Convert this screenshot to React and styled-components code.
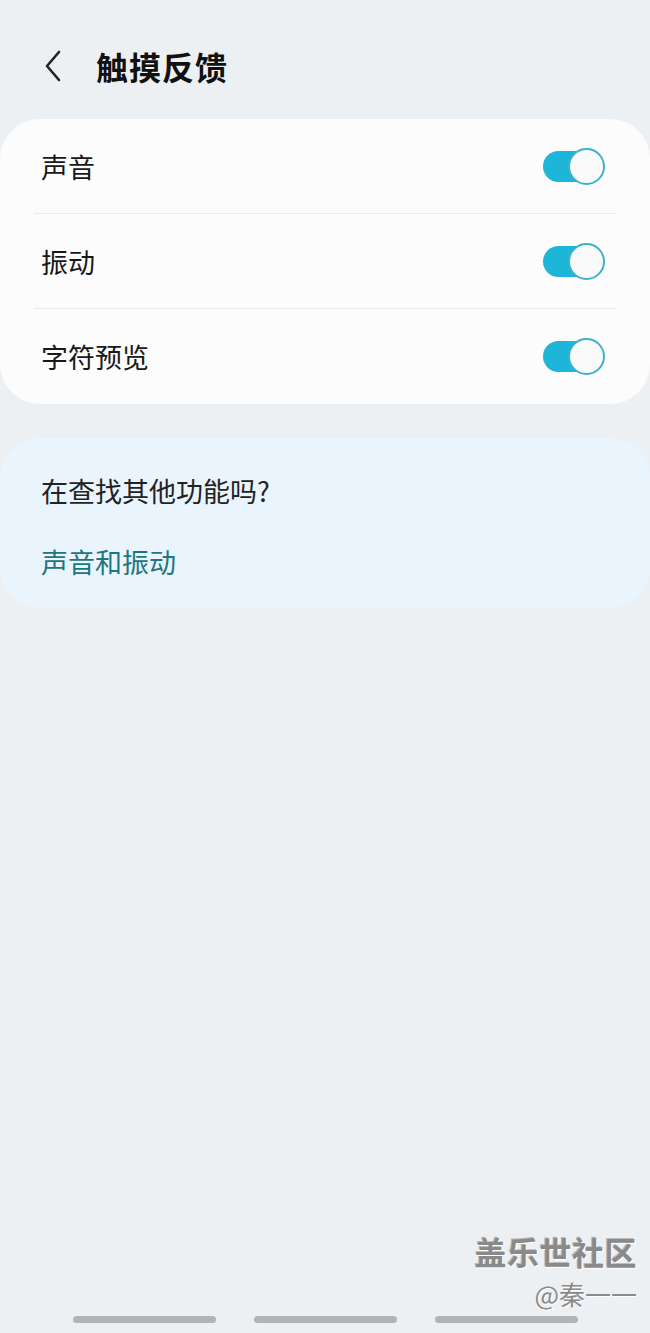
import React from 'react'
import styled, { createGlobalStyle } from 'styled-components'

const GlobalStyle = createGlobalStyle`
  html, body {
    margin: 0;
    padding: 0;
    background: #edf0f2;
  }
  body {
    font-family: "Noto Sans CJK SC", "Noto Sans", sans-serif;
  }
`

const Page = styled.div`
  width: 650px;
  height: 1333px;
  display: flex;
  flex-direction: column;
  background: #edf0f2;
  overflow: hidden;
`

const Header = styled.div`
  height: 119px;
  display: flex;
  align-items: center;
  padding: 12px 0 0 38px;
  box-sizing: border-box;
  gap: 28px;
`

const BackButton = styled.div`
  width: 30px;
  height: 36px;
  display: flex;
  align-items: center;
  justify-content: center;
`

const Title = styled.h1`
  margin: 0;
  font-size: 32px;
  font-weight: 700;
  color: #111;
  letter-spacing: 1px;
`

const Card = styled.div`
  background: ${({ tint }) => (tint ? '#eaf4fc' : '#fcfcfc')};
  border-radius: 40px;
  display: flex;
  flex-direction: column;
  padding: ${({ pad }) => pad || '0'};
`

const Row = styled.div`
  height: 95px;
  margin: 0 34px;
  display: flex;
  align-items: center;
  justify-content: space-between;
  border-bottom: ${({ last }) => (last ? 'none' : '1.5px solid #e8eaeb')};
  box-sizing: border-box;
`

const Label = styled.span`
  font-size: 27px;
  color: #181818;
  padding-left: 7px;
`

const Toggle = styled.div`
  position: relative;
  width: 62px;
  height: 37px;
  margin-right: 11px;
  display: flex;
  align-items: center;
`

const Track = styled.div`
  width: 58px;
  height: 31px;
  border-radius: 16px;
  background: #1db5d8;
`

const Thumb = styled.div`
  position: absolute;
  right: 0;
  top: 0;
  width: 33px;
  height: 33px;
  border-radius: 50%;
  background: #fafafa;
  border: 2px solid #3db2c9;
`

const Spacer = styled.div`
  height: 34px;
`

const Question = styled.div`
  font-size: 27px;
  color: #222;
  padding-left: 41px;
  height: 36px;
  line-height: 36px;
`

const Link = styled.div`
  font-size: 27px;
  color: #1d7680;
  padding-left: 41px;
  margin-top: 35px;
  height: 36px;
  line-height: 36px;
`

const Fill = styled.div`
  flex: 1;
  display: flex;
  flex-direction: column;
  justify-content: flex-end;
`

const Watermark = styled.div`
  align-self: flex-end;
  margin-right: 13px;
  display: flex;
  flex-direction: column;
  align-items: flex-end;
  gap: 10px;
  margin-bottom: 4px;
`

const MarkTitle = styled.div`
  font-size: 32px;
  font-weight: 700;
  color: #8a8a8a;
  line-height: 38px;
  text-shadow: 1px 1px 0 #fff, -1px -1px 0 #bbb;
  letter-spacing: 0.5px;
`

const MarkUser = styled.div`
  font-size: 26px;
  color: #8a8a8a;
  line-height: 28px;
  text-shadow: 1px 1px 0 #fff;
`

const NavBar = styled.div`
  display: flex;
  justify-content: center;
  gap: 38px;
  padding: 4px 0 10px;
`

const NavLine = styled.div`
  width: 143px;
  height: 7px;
  border-radius: 4px;
  background: #b0b4b6;
`

const Switch = () => (
  <Toggle>
    <Track />
    <Thumb />
  </Toggle>
)

const settings = ['声音', '振动', '字符预览']

export default function App() {
  return (
    <Page>
      <GlobalStyle />
      <Header>
        <BackButton>
          <svg width="20" height="34" viewBox="0 0 20 34" fill="none">
            <path d="M16 3 L4 17 L16 31" stroke="#222" strokeWidth="2.6" strokeLinecap="round" strokeLinejoin="round" />
          </svg>
        </BackButton>
        <Title>触摸反馈</Title>
      </Header>

      <Card>
        {settings.map((s, i) => (
          <Row key={s} last={i === settings.length - 1}>
            <Label>{s}</Label>
            <Switch />
          </Row>
        ))}
      </Card>

      <Spacer />

      <Card tint pad="35px 0 28px">
        <Question>在查找其他功能吗?</Question>
        <Link>声音和振动</Link>
      </Card>

      <Fill>
        <Watermark>
          <MarkTitle>盖乐世社区</MarkTitle>
          <MarkUser>@秦一一</MarkUser>
        </Watermark>
        <NavBar>
          <NavLine />
          <NavLine />
          <NavLine />
        </NavBar>
      </Fill>
    </Page>
  )
}
